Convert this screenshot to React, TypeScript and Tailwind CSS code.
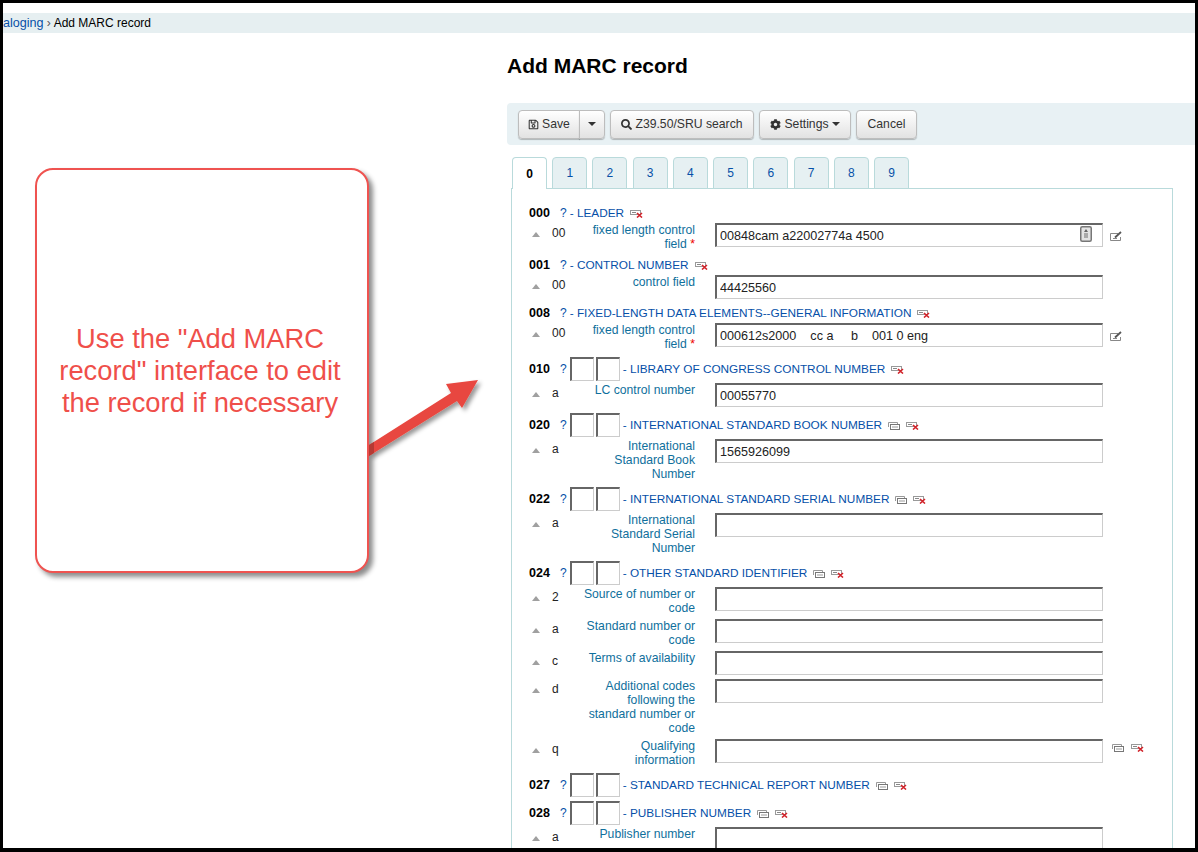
import React from "react";
import { FaCog, FaRegSave, FaSearch } from "react-icons/fa";

function CloneIcon() {
  return (
    <svg width="12" height="8" viewBox="0 0 12 8" className="shrink-0">
      <path d="M.5 5V.5h9V2" fill="none" stroke="#999" />
      <rect x="2.5" y="2.5" width="9" height="5" fill="#fff" stroke="#777" />
      <path d="M4 5h6" stroke="#999" />
    </svg>
  );
}

function DeleteIcon() {
  return (
    <svg width="13" height="8" viewBox="0 0 13 8" className="shrink-0">
      <rect x=".5" y=".5" width="10" height="4" fill="#fff" stroke="#999" />
      <path d="M2 2.5h4" stroke="#888" />
      <path d="M7 3l5 4.5M12 3L7 7.5" stroke="#d1232a" strokeWidth="1.6" />
    </svg>
  );
}

function EditIcon() {
  return (
    <svg width="13" height="10" viewBox="0 0 13 10" className="shrink-0">
      <path d="M8 2.5H.5v7h10V6" fill="none" stroke="#888" />
      <path d="M5 6.5L11 1" stroke="#555" strokeWidth="1.8" />
      <path d="M3 7.5h4" stroke="#888" />
    </svg>
  );
}

function PluginIcon() {
  return (
    <svg width="12" height="16" viewBox="0 0 12 16">
      <rect x=".75" y=".75" width="10.5" height="14.5" rx="1.5" fill="#e4e4e4" stroke="#777" strokeWidth="1.5" />
      <path d="M6 3l2 3H4z" fill="#666" />
      <rect x="4" y="7" width="4" height="5" fill="#aaa" />
    </svg>
  );
}

function Triangle() {
  return <span className="mt-[9px] ml-[3px] h-0 w-0 shrink-0 border-x-4 border-b-[5px] border-x-transparent border-b-[#a0a0a0]" />;
}

function IndicatorBox() {
  return <span className="h-6 w-6 shrink-0 border-t-2 border-r border-b border-l-2 border-t-[#666] border-r-[#ccc] border-b-[#ccc] border-l-[#666] bg-white" />;
}

function TagRow({ num, title, ind, clone }: { num: string; title: string; ind?: boolean; clone?: boolean }) {
  return (
    <div className={ind ? "flex h-7 items-center" : "flex h-5 items-center"}>
      <span className="w-[31px] shrink-0 text-[12.5px] font-bold text-black">{num}</span>
      <span className="text-[#0650a8]">?</span>
      {ind ? (
        <span className="ml-[3px] flex gap-[2px]">
          <IndicatorBox />
          <IndicatorBox />
        </span>
      ) : null}
      <span className="ml-[3px] text-[11.8px] whitespace-nowrap text-[#0650a8]">- {title}</span>
      {clone ? (
        <span className="mt-[2px] ml-[6px] flex">
          <CloneIcon />
        </span>
      ) : null}
      <span className="mt-[2px] ml-[6px] flex">
        <DeleteIcon />
      </span>
    </div>
  );
}

function SubRow({
  code,
  label,
  required,
  value,
  edit,
  plugin,
  actions,
}: {
  code: string;
  label: string;
  required?: boolean;
  value?: string;
  edit?: boolean;
  plugin?: boolean;
  actions?: boolean;
}) {
  return (
    <div className="mb-1 flex items-start">
      <Triangle />
      <span className="mt-[3px] ml-3 w-[28px] shrink-0 text-[#222]">{code}</span>
      <label className="w-[115px] shrink-0 text-right text-[12.2px] text-[#0f6f9c]">
        {label}
        {required ? <span className="text-[#e00]"> *</span> : null}
      </label>
      <div className="relative ml-5 h-6 w-[388px] shrink-0">
        <input
          readOnly
          value={value ?? ""}
          className="h-6 w-full border-t-2 border-r border-b border-l-2 border-t-[#666] border-r-[#ccc] border-b-[#ccc] border-l-[#666] bg-white pl-[3px] text-[12.6px] text-[#222] outline-none"
        />
        {plugin ? (
          <span className="absolute top-[3px] right-[11px]">
            <PluginIcon />
          </span>
        ) : null}
      </div>
      {edit ? (
        <span className="mt-2 ml-[7px] flex">
          <EditIcon />
        </span>
      ) : null}
      {actions ? (
        <span className="mt-[5px] ml-[9px] flex gap-[7px]">
          <CloneIcon />
          <DeleteIcon />
        </span>
      ) : null}
    </div>
  );
}

function ToolButton({ children, className }: { children: React.ReactNode; className?: string }) {
  return (
    <button
      className={`flex h-[29px] items-center justify-center rounded border border-[#bdbdbd] bg-gradient-to-b from-white to-[#e2e2e2] text-[12.2px] text-[#333] shadow-[0_1px_1px_rgba(0,0,0,0.25)] ${className ?? ""}`}
    >
      {children}
    </button>
  );
}

function Caret() {
  return <span className="h-0 w-0 border-x-4 border-t-4 border-x-transparent border-t-[#333]" />;
}

const tabs = ["0", "1", "2", "3", "4", "5", "6", "7", "8", "9"];

export default function App() {
  return (
    <div className="relative h-[852px] w-[1198px] overflow-hidden border-x-[3px] border-t-[3px] border-b-4 border-black bg-white text-[12px] leading-[14px] [font-family:'Liberation_Sans',Arial,sans-serif]">
      <div className="mt-[10px] flex h-5 items-center bg-[#e6eff1] text-[12px]">
        <a className="text-[12.6px] text-[#0650a8]">aloging</a>
        <span className="mx-[3px] text-[#555]">›</span>
        <span className="text-black">Add MARC record</span>
      </div>
      <div className="flex">
        <div className="w-[504px] shrink-0">
          <div className="mt-[135px] ml-8 flex h-[405px] w-[334px] items-center justify-center rounded-[18px] border-2 border-[#ef5350] bg-white pr-1 shadow-[4px_4px_5px_rgba(0,0,0,0.45)]">
            <p className="w-[310px] text-center text-[27.3px] leading-8 text-[#ef4f4a]">
              Use the "Add MARC record" interface to edit the record if necessary
            </p>
          </div>
        </div>
        <div className="min-w-0 flex-1">
          <h1 className="mt-[22px] text-[21px] leading-[22px] font-bold text-black">Add MARC record</h1>
          <div className="mt-[26px] flex h-[42px] items-center gap-[5px] rounded-l bg-[#e8f1f4] pl-[11px]">
            <div className="flex">
              <ToolButton className="w-[62px] gap-[3px] rounded-r-none">
                <FaRegSave className="h-[11px] w-[11px]" />
                Save
              </ToolButton>
              <ToolButton className="-ml-px w-[26px] rounded-l-none">
                <Caret />
              </ToolButton>
            </div>
            <ToolButton className="w-[144px] gap-[3px]">
              <FaSearch className="h-[11px] w-[11px]" />
              Z39.50/SRU search
            </ToolButton>
            <ToolButton className="w-[92px] gap-[3px]">
              <FaCog className="h-[11px] w-[11px]" />
              Settings
              <Caret />
            </ToolButton>
            <ToolButton className="w-[61px]">Cancel</ToolButton>
          </div>
          <div className="relative z-10 mt-3 -mb-px ml-[5px] flex gap-[5.22px]">
            {tabs.map((t) => (
              <div
                key={t}
                className={
                  t === "0"
                    ? "flex h-8 w-[35px] items-center justify-center rounded-t border border-b-0 border-[#b9dadb] bg-white font-bold text-black"
                    : "flex h-8 w-[35px] items-center justify-center rounded-t border border-[#b9dadb] bg-[#e6f0f2] text-[#0650a8]"
                }
              >
                {t}
              </div>
            ))}
          </div>
          <div className="ml-1 h-[700px] w-[662px] border border-[#b9dadb] bg-white pt-[14px] pl-[17px]">
            <TagRow num="000" title="LEADER" />
            <SubRow code="00" label="fixed length control field" required value="00848cam a22002774a 4500" edit plugin />
            <TagRow num="001" title="CONTROL NUMBER" />
            <SubRow code="00" label="control field" value="44425560" />
            <TagRow num="008" title="FIXED-LENGTH DATA ELEMENTS--GENERAL INFORMATION" />
            <SubRow code="00" label="fixed length control field" required value="000612s2000    cc a     b    001 0 eng" edit />
            <TagRow num="010" title="LIBRARY OF CONGRESS CONTROL NUMBER" ind />
            <SubRow code="a" label="LC control number" value="00055770" />
            <TagRow num="020" title="INTERNATIONAL STANDARD BOOK NUMBER" ind clone />
            <SubRow code="a" label="International Standard Book Number" value="1565926099" />
            <TagRow num="022" title="INTERNATIONAL STANDARD SERIAL NUMBER" ind clone />
            <SubRow code="a" label="International Standard Serial Number" />
            <TagRow num="024" title="OTHER STANDARD IDENTIFIER" ind clone />
            <SubRow code="2" label="Source of number or code" />
            <SubRow code="a" label="Standard number or code" />
            <SubRow code="c" label="Terms of availability" />
            <SubRow code="d" label="Additional codes following the standard number or code" />
            <SubRow code="q" label="Qualifying information" actions />
            <TagRow num="027" title="STANDARD TECHNICAL REPORT NUMBER" ind clone />
            <TagRow num="028" title="PUBLISHER NUMBER" ind clone />
            <SubRow code="a" label="Publisher number" />
          </div>
        </div>
      </div>
      {/* arrow from the callout to the form */}
      <svg width="120" height="90" viewBox="0 0 120 90" className="absolute top-[374px] left-[363px] overflow-visible">
        <defs>
          <filter id="arrowShadow" x="-20%" y="-20%" width="150%" height="150%">
            <feDropShadow dx="3" dy="3" stdDeviation="2" floodColor="#000" floodOpacity="0.4" />
          </filter>
        </defs>
        <polygon points="3,68 85,16 80,7 112,3 96,31 91,24 3,79" fill="#e8473f" filter="url(#arrowShadow)" />
        <polygon points="3,68 8,65 8,76 3,79" fill="#b53a34" />
      </svg>
    </div>
  );
}
